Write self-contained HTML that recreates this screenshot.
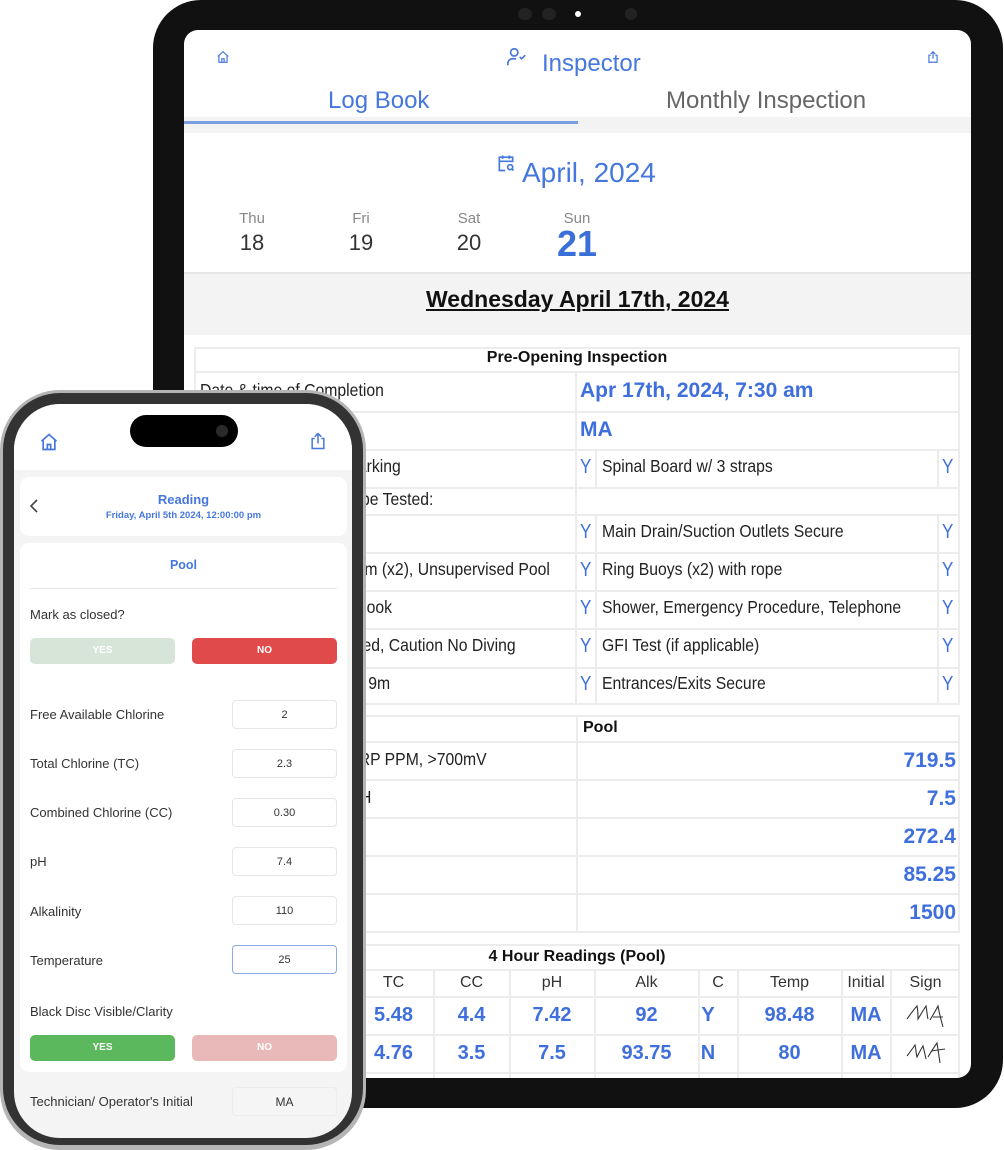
<!DOCTYPE html>
<html><head><meta charset="utf-8"><style>
*{margin:0;padding:0;box-sizing:border-box}
body{width:1004px;height:1150px;background:#fff;position:relative;overflow:hidden;font-family:"Liberation Sans",sans-serif}
.a{position:absolute}
.t{position:absolute;font-size:16px;color:#222;white-space:nowrap}
.blue{color:#4677de !important}
.n{font-size:17.5px;transform:scaleX(.9);transform-origin:left center}
.r{position:absolute;font-size:17.5px;color:#222;white-space:nowrap;text-align:right;transform:scaleX(.9);transform-origin:right center}
.y{position:absolute;font-size:20px;color:#3f6fdc;transform:scaleX(.85)}
.hl{position:absolute;height:2px;background:#ececec}
.vl{position:absolute;width:2px;background:#ececec}
.num{position:absolute;font-size:21px;color:#3f6fdc;font-weight:bold;text-align:right;transform-origin:right}
.c{position:absolute;text-align:center;white-space:nowrap}
.lbl{position:absolute;left:30px;font-size:13px;color:#333}
.inp{position:absolute;left:232px;width:105px;height:29px;border:1px solid #e6e6e6;border-radius:4px;background:#fff;font-size:11px;color:#333;text-align:center;line-height:28px}
</style></head><body>

<!-- Tablet -->
<div class="a" style="left:153px;top:0;width:850px;height:1108px;background:#111;border-radius:48px"></div>
<div class="a" style="left:518px;top:8px;width:14px;height:12px;background:#222;border-radius:6px"></div>
<div class="a" style="left:542px;top:8px;width:14px;height:12px;background:#222;border-radius:6px"></div>
<div class="a" style="left:575px;top:11px;width:6px;height:6px;background:#fff;border-radius:3px"></div>
<div class="a" style="left:625px;top:8px;width:12px;height:12px;background:#222;border-radius:6px"></div>
<div class="a" style="left:184px;top:30px;width:787px;height:1048px;background:#fff;border-radius:14px;overflow:hidden">
  <svg class="a" style="left:32px;top:20px" width="14" height="14" viewBox="0 0 24 24" fill="none" stroke="#4677de" stroke-width="2"><path d="M3 11L12 3l9 8M5 9v12h14V9M10 21v-6h4v6"/></svg>
  <svg class="a" style="left:742px;top:19px" width="14" height="16" viewBox="0 0 24 24" fill="none" stroke="#4677de" stroke-width="2"><path d="M8 9H5v12h14V9h-3M12 15V3M8 7l4-4 4 4"/></svg>
  <svg class="a" style="left:322px;top:16px" width="22" height="22" viewBox="0 0 24 24" fill="none" stroke="#4677de" stroke-width="1.8"><circle cx="9" cy="7" r="4"/><path d="M2 21v-2a5 5 0 0 1 5-5h4M15 12l2 2 4-4"/></svg>
  <div class="t blue" style="left:358px;top:20px;font-size:24px">Inspector</div>
  <div class="t blue" style="left:144px;top:57px;font-size:24px">Log Book</div>
  <div class="t" style="left:482px;top:57px;font-size:24px;color:#666">Monthly Inspection</div>
  <div class="a" style="left:0;top:87px;width:787px;height:16px;background:#f3f3f3"></div>
  <div class="a" style="left:0;top:91px;width:394px;height:3px;background:#7a9fe3"></div>
  <svg class="a" style="left:312px;top:122px" width="20" height="22" viewBox="0 0 24 24" fill="none" stroke="#4677de" stroke-width="2"><path d="M11 21H4V5h16v6M4 10h16M8 3v4M16 3v4"/><circle cx="17" cy="17" r="3"/><path d="M19 19l2 2"/></svg>
  <div class="t blue" style="left:338px;top:127px;font-size:28px">April, 2024</div>
  <div class="c" style="left:38px;width:60px;top:180px;font-size:15px;color:#888">Thu</div>
  <div class="c" style="left:38px;width:60px;top:200px;font-size:22px;color:#333">18</div>
  <div class="c" style="left:147px;width:60px;top:180px;font-size:15px;color:#888">Fri</div>
  <div class="c" style="left:147px;width:60px;top:200px;font-size:22px;color:#333">19</div>
  <div class="c" style="left:255px;width:60px;top:180px;font-size:15px;color:#888">Sat</div>
  <div class="c" style="left:255px;width:60px;top:200px;font-size:22px;color:#333">20</div>
  <div class="c" style="left:363px;width:60px;top:180px;font-size:15px;color:#888">Sun</div>
  <div class="c" style="left:363px;width:60px;top:193px;font-size:36px;font-weight:bold;color:#3a6fd8">21</div>
  <div class="a" style="left:0;top:242px;width:787px;height:63px;background:#f3f3f3;border-top:2px solid #e6e6e6"></div>
  <div class="c" style="left:0;width:787px;top:256px;font-size:23px;font-weight:bold;color:#111;text-decoration:underline">Wednesday April 17th, 2024</div>

  <!-- table 1 -->
  <div class="a" style="left:10px;top:317px;width:766px;height:358px;border:2px solid #ececec"></div>
  <div class="c" style="left:10px;width:766px;top:319px;font-size:16px;font-weight:bold;color:#111">Pre-Opening Inspection</div>
  <div class="hl" style="left:10px;width:766px;top:341px"></div>
  <div class="hl" style="left:10px;width:766px;top:381px"></div>
  <div class="hl" style="left:10px;width:766px;top:419px"></div>
  <div class="hl" style="left:10px;width:766px;top:457px"></div>
  <div class="hl" style="left:10px;width:766px;top:484px"></div>
  <div class="hl" style="left:10px;width:766px;top:522px"></div>
  <div class="hl" style="left:10px;width:766px;top:560px"></div>
  <div class="hl" style="left:10px;width:766px;top:598px"></div>
  <div class="hl" style="left:10px;width:766px;top:637px"></div>
  <div class="vl" style="left:391px;top:341px;height:334px"></div>
  <div class="vl" style="left:411px;top:419px;height:38px"></div>
  <div class="vl" style="left:753px;top:419px;height:38px"></div>
  <div class="vl" style="left:411px;top:484px;height:191px"></div>
  <div class="vl" style="left:753px;top:484px;height:191px"></div>
  <div class="t n" style="left:16px;top:350px">Date &amp; time of Completion</div>
  <div class="t" style="left:396px;top:349px;font-size:21px;font-weight:bold;color:#3f6fdc">Apr 17th, 2024, 7:30 am</div>
  <div class="t" style="left:396px;top:388px;font-size:21px;font-weight:bold;color:#3f6fdc">MA</div>
  <div class="r" style="right:570px;top:426px">Lifeguard Chair Marking</div>
  <div class="r" style="right:538px;top:459px">Equipment to be Tested:</div>
  <div class="r" style="right:421px;top:529px">Signs: Swim (x2), Unsupervised Pool</div>
  <div class="r" style="right:579px;top:567px">Log book</div>
  <div class="r" style="right:455px;top:605px">Depth Marked, Caution No Diving</div>
  <div class="r" style="right:581px;top:643px">Shepherd 9m</div>
  <div class="t n" style="left:418px;top:426px">Spinal Board w/ 3 straps</div>
  <div class="t n" style="left:418px;top:491px">Main Drain/Suction Outlets Secure</div>
  <div class="t n" style="left:418px;top:529px">Ring Buoys (x2) with rope</div>
  <div class="t n" style="left:418px;top:567px">Shower, Emergency Procedure, Telephone</div>
  <div class="t n" style="left:418px;top:605px">GFI Test (if applicable)</div>
  <div class="t n" style="left:418px;top:643px">Entrances/Exits Secure</div>
  <div class="y" style="left:395px;top:426px">Y</div><div class="y" style="left:757px;top:426px">Y</div>
  <div class="y" style="left:395px;top:491px">Y</div><div class="y" style="left:757px;top:491px">Y</div>
  <div class="y" style="left:395px;top:529px">Y</div><div class="y" style="left:757px;top:529px">Y</div>
  <div class="y" style="left:395px;top:567px">Y</div><div class="y" style="left:757px;top:567px">Y</div>
  <div class="y" style="left:395px;top:605px">Y</div><div class="y" style="left:757px;top:605px">Y</div>
  <div class="y" style="left:395px;top:643px">Y</div><div class="y" style="left:757px;top:643px">Y</div>

  <!-- table 2 -->
  <div class="a" style="left:10px;top:685px;width:766px;height:218px;border:2px solid #ececec"></div>
  <div class="vl" style="left:392px;top:685px;height:218px"></div>
  <div class="hl" style="left:10px;width:766px;top:711px"></div>
  <div class="hl" style="left:10px;width:766px;top:749px"></div>
  <div class="hl" style="left:10px;width:766px;top:787px"></div>
  <div class="hl" style="left:10px;width:766px;top:825px"></div>
  <div class="hl" style="left:10px;width:766px;top:863px"></div>
  <div class="t" style="left:399px;top:689px;font-weight:bold;color:#111">Pool</div>
  <div class="r" style="right:484px;top:719px">Free Chlorine/ORP PPM, &gt;700mV</div>
  <div class="r" style="right:600px;top:757px">pH</div>
  <div class="num" style="right:15px;top:719px">719.5</div>
  <div class="num" style="right:15px;top:757px">7.5</div>
  <div class="num" style="right:15px;top:795px">272.4</div>
  <div class="num" style="right:15px;top:833px">85.25</div>
  <div class="num" style="right:15px;top:871px">1500</div>

  <!-- table 3 -->
  <div class="a" style="left:10px;top:914px;width:766px;height:150px;border:2px solid #ececec"></div>
  <div class="c" style="left:10px;width:766px;top:918px;font-size:16px;font-weight:bold;color:#111">4 Hour Readings (Pool)</div>
  <div class="hl" style="left:10px;width:766px;top:939px"></div>
  <div class="hl" style="left:10px;width:766px;top:966px"></div>
  <div class="hl" style="left:10px;width:766px;top:1004px"></div>
  <div class="hl" style="left:10px;width:766px;top:1042px"></div>
  <div class="vl" style="left:249px;top:939px;height:125px"></div>
  <div class="vl" style="left:325px;top:939px;height:125px"></div>
  <div class="vl" style="left:410px;top:939px;height:125px"></div>
  <div class="vl" style="left:514px;top:939px;height:125px"></div>
  <div class="vl" style="left:553px;top:939px;height:125px"></div>
  <div class="vl" style="left:657px;top:939px;height:125px"></div>
  <div class="vl" style="left:706px;top:939px;height:125px"></div>
  <div class="c" style="left:170px;width:79px;top:944px;font-size:16px;color:#333">TC</div>
  <div class="c" style="left:250px;width:75px;top:944px;font-size:16px;color:#333">CC</div>
  <div class="c" style="left:326px;width:84px;top:944px;font-size:16px;color:#333">pH</div>
  <div class="c" style="left:411px;width:103px;top:944px;font-size:16px;color:#333">Alk</div>
  <div class="c" style="left:515px;width:38px;top:944px;font-size:16px;color:#333">C</div>
  <div class="c" style="left:554px;width:103px;top:944px;font-size:16px;color:#333">Temp</div>
  <div class="c" style="left:658px;width:48px;top:944px;font-size:16px;color:#333">Initial</div>
  <div class="c" style="left:707px;width:69px;top:944px;font-size:16px;color:#333">Sign</div>
  <div class="c" style="left:170px;width:79px;top:974px;font-size:20px;font-weight:bold;color:#3f6fdc">5.48</div>
  <div class="c" style="left:250px;width:75px;top:974px;font-size:20px;font-weight:bold;color:#3f6fdc">4.4</div>
  <div class="c" style="left:326px;width:84px;top:974px;font-size:20px;font-weight:bold;color:#3f6fdc">7.42</div>
  <div class="c" style="left:411px;width:103px;top:974px;font-size:20px;font-weight:bold;color:#3f6fdc">92</div>
  <div class="c" style="left:515px;width:18px;top:974px;font-size:20px;font-weight:bold;color:#3f6fdc">Y</div>
  <div class="c" style="left:554px;width:103px;top:974px;font-size:20px;font-weight:bold;color:#3f6fdc">98.48</div>
  <div class="c" style="left:658px;width:48px;top:974px;font-size:20px;font-weight:bold;color:#3f6fdc">MA</div>
  <div class="c" style="left:170px;width:79px;top:1012px;font-size:20px;font-weight:bold;color:#3f6fdc">4.76</div>
  <div class="c" style="left:250px;width:75px;top:1012px;font-size:20px;font-weight:bold;color:#3f6fdc">3.5</div>
  <div class="c" style="left:326px;width:84px;top:1012px;font-size:20px;font-weight:bold;color:#3f6fdc">7.5</div>
  <div class="c" style="left:411px;width:103px;top:1012px;font-size:20px;font-weight:bold;color:#3f6fdc">93.75</div>
  <div class="c" style="left:515px;width:18px;top:1012px;font-size:20px;font-weight:bold;color:#3f6fdc">N</div>
  <div class="c" style="left:554px;width:103px;top:1012px;font-size:20px;font-weight:bold;color:#3f6fdc">80</div>
  <div class="c" style="left:658px;width:48px;top:1012px;font-size:20px;font-weight:bold;color:#3f6fdc">MA</div>
  <svg class="a" style="left:722px;top:973px" width="42" height="26" viewBox="0 0 42 26" fill="none" stroke="#333" stroke-width="1.1"><path d="M1 16C4 12 8 6 11 3c1 4 1 8 1 13 3-5 6-10 8-13 1 5 1 9 2 13M24 17c3-5 6-10 8-14 1 6 3 14 5 21M27 14h10"/></svg>
  <svg class="a" style="left:722px;top:1010px" width="42" height="26" viewBox="0 0 42 26" fill="none" stroke="#333" stroke-width="1.1"><path d="M1 16c3-4 6-8 8-11 1 4 1 8 2 12 2-4 4-8 6-11 1 4 2 8 3 13M22 17c3-5 6-10 9-14 1 6 2 13 3 20M25 11l14-2"/></svg>
</div>

<!-- Phone -->
<div class="a" style="left:0;top:390px;width:366px;height:760px;background:#b5b5b5;border-radius:60px"></div>
<div class="a" style="left:3px;top:393px;width:360px;height:752px;background:#333;border-radius:57px"></div>
<div class="a" style="left:14px;top:404px;width:338px;height:734px;background:#f4f4f5;border-radius:46px;overflow:hidden">
  <div class="a" style="left:0;top:0;width:338px;height:66px;background:#fff"></div>
  <svg class="a" style="left:25px;top:28px" width="20" height="20" viewBox="0 0 24 24" fill="none" stroke="#4677de" stroke-width="2"><path d="M3 11L12 3l9 8M5 9v12h14V9M10 21v-6h4v6"/></svg>
  <svg class="a" style="left:294px;top:26px" width="20" height="22" viewBox="0 0 24 24" fill="none" stroke="#4677de" stroke-width="1.8"><path d="M8 9H5v12h14V9h-3M12 15V3M8 7l4-4 4 4"/></svg>
  <div class="a" style="left:6px;top:73px;width:327px;height:59px;background:#fff;border-radius:9px"></div>
  <svg class="a" style="left:15px;top:95px" width="10" height="14" viewBox="0 0 10 14" fill="none" stroke="#444" stroke-width="1.6"><path d="M8 1L2 7l6 6"/></svg>
  <div class="c" style="left:6px;width:327px;top:88px;font-size:13px;font-weight:bold;color:#4677de">Reading</div>
  <div class="c" style="left:6px;width:327px;top:106px;font-size:9.5px;font-weight:bold;color:#4677de">Friday, April 5th 2024, 12:00:00 pm</div>
  <div class="a" style="left:6px;top:139px;width:327px;height:529px;background:#fff;border-radius:9px"></div>
  <div class="c" style="left:6px;width:327px;top:154px;font-size:12.5px;font-weight:bold;color:#4677de">Pool</div>
  <div class="a" style="left:16px;top:184px;width:307px;height:1px;background:#e8e8e8"></div>
</div>
<div class="lbl" style="top:607px">Mark as closed?</div>
<div class="c" style="left:30px;top:638px;width:145px;height:26px;background:#d6e5d7;border-radius:5px;color:#fff;font-size:10px;font-weight:bold;line-height:26px">YES</div>
<div class="c" style="left:192px;top:638px;width:145px;height:26px;background:#e04a4a;border-radius:5px;color:#fff;font-size:10px;font-weight:bold;line-height:26px">NO</div>
<div class="lbl" style="top:707px">Free Available Chlorine</div><div class="inp" style="top:700px">2</div>
<div class="lbl" style="top:756px">Total Chlorine (TC)</div><div class="inp" style="top:749px">2.3</div>
<div class="lbl" style="top:805px">Combined Chlorine (CC)</div><div class="inp" style="top:798px">0.30</div>
<div class="lbl" style="top:854px">pH</div><div class="inp" style="top:847px">7.4</div>
<div class="lbl" style="top:904px">Alkalinity</div><div class="inp" style="top:896px">110</div>
<div class="lbl" style="top:953px">Temperature</div><div class="inp" style="top:945px;border:1.5px solid #8aa9e6">25</div>
<div class="lbl" style="top:1004px">Black Disc Visible/Clarity</div>
<div class="c" style="left:30px;top:1035px;width:145px;height:26px;background:#5cb85c;border-radius:5px;color:#fff;font-size:10px;font-weight:bold;line-height:26px">YES</div>
<div class="c" style="left:192px;top:1035px;width:145px;height:26px;background:#e9b9b9;border-radius:5px;color:#fff;font-size:10px;font-weight:bold;line-height:26px">NO</div>
<div class="lbl" style="top:1094px">Technician/ Operator's Initial</div><div class="inp" style="top:1087px;background:#f5f5f5;border-color:#ececec;font-size:12px">MA</div>
<div class="a" style="left:130px;top:415px;width:108px;height:32px;background:#000;border-radius:16px"></div>
<div class="a" style="left:216px;top:425px;width:12px;height:12px;background:#2a2a2a;border-radius:6px"></div>
</body></html>
